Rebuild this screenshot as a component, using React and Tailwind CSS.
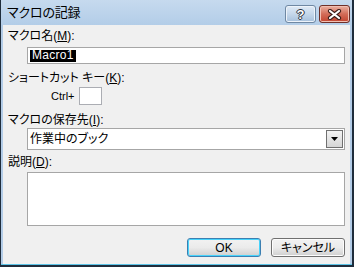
import React from 'react';

const FONT = "font-['Liberation_Sans','Noto_Sans_CJK_JP',sans-serif] [font-feature-settings:'palt']";

function Label({ children, k, after = '' }) {
  return (
    <div className="h-[14px] leading-[14px] text-[12px] text-black pl-[5px]">
      {children}(<span className="underline">{k}</span>){after}:
    </div>
  );
}

function Btn({ children, primary }) {
  return (
    <button
      className={`w-[74px] h-[19px] rounded-[3px] border text-[12px] leading-none text-black bg-gradient-to-b from-[#f2f2f2] via-[#ebebeb] to-[#cfcfcf] ${
        primary ? 'border-[#3c7fb1] shadow-[inset_0_0_0_1px_#48d3fb]' : 'border-[#707070] shadow-[inset_0_0_0_1px_#fcfcfc]'
      }`}
    >
      {children}
    </button>
  );
}

export default function App() {
  return (
    <div className={`w-[354px] h-[267px] bg-[#1f2d3c] pl-px pr-[2px] pb-[2px] ${FONT}`}>
      <div className="h-full flex flex-col bg-[#b3cce7] border-b border-[#5cc3e6]">
        {/* title bar */}
        <div className="h-[25px] flex items-start bg-gradient-to-b from-[#c6daee] to-[#b3cde8] pl-[6px] pr-[2px]">
          <span className="mt-[6px] text-[13px] leading-[14px] text-black tracking-[-0.2px]">マクロの記録</span>
          <div className="ml-auto mt-[5px] flex gap-[3px]">
            <div className="w-[31px] h-[18px] rounded-[3px] border border-[#6f88a3] bg-gradient-to-b from-[#e0ebf6] via-[#c5d7ea] to-[#a6c0dc] flex items-center justify-center shadow-[inset_0_0_0_1px_#edf3fa]">
              <span className="text-[13px] font-bold leading-none text-white [text-shadow:0_0_1px_#233,1px_0_0_#334,-1px_0_0_#334,0_1px_0_#334,0_-1px_0_#334]">?</span>
            </div>
            <div className="w-[31px] h-[18px] rounded-[3px] border border-[#6e2f28] bg-gradient-to-b from-[#eab0a2] via-[#d26c58] to-[#c2422e] flex items-center justify-center shadow-[inset_0_0_0_1px_#f0bfb2]">
              <svg width="15" height="11" viewBox="0 0 15 11">
                <path d="M3 2 L12 9 M12 2 L3 9" stroke="#3a1c18" strokeWidth="4.2" strokeLinecap="round" />
                <path d="M3 2 L12 9 M12 2 L3 9" stroke="#ffffff" strokeWidth="2.2" strokeLinecap="round" />
              </svg>
            </div>
          </div>
        </div>

        {/* client */}
        <div className="flex-1 mx-[2px] bg-[#f0f0f0] flex flex-col pt-[4px] pr-[5px]">
          <Label k="M">マクロ名</Label>
          <div className="mt-[4px] ml-[24px] h-[17px] border border-[#a6a6a6] bg-white flex items-center px-[2px]">
            <span className="bg-black text-white text-[12px] leading-[11px] h-[12px] px-[2px] tracking-[0.3px]">Macro1</span>
          </div>

          <div className="mt-[7px]">
            <Label k="K">ショートカット キー</Label>
          </div>
          <div className="mt-[2px] h-[18px] flex items-center">
            <span className="ml-[48px] text-[11px] leading-none text-black">Ctrl+</span>
            <div className="ml-[4px] w-[23px] h-[18px] border border-[#abadb3] bg-white" />
          </div>

          <div className="mt-[8px]">
            <Label k="I">マクロの保存先</Label>
          </div>
          <div className="mt-px ml-[24px] h-[22px] border border-[#a6a6a6] bg-white flex items-center">
            <span className="pl-[2px] text-[12px] leading-none text-black">作業中のブック</span>
            <div className="ml-auto mr-px w-[17px] h-[18px] border border-[#707070] bg-gradient-to-b from-[#f3f3f3] to-[#d6d6d6] flex items-center justify-center">
              <svg width="7" height="4" viewBox="0 0 7 4">
                <path d="M0 0 H7 L3.5 4 Z" fill="#000" />
              </svg>
            </div>
          </div>

          <div className="mt-[5px]">
            <Label k="D">説明</Label>
          </div>
          <div className="mt-[3px] ml-[24px] h-[54px] border border-[#a6a6a6] bg-white" />

          <div className="mt-[12px] flex justify-end gap-[10px]">
            <Btn primary>OK</Btn>
            <Btn>キャンセル</Btn>
          </div>
        </div>
      </div>
    </div>
  );
}
